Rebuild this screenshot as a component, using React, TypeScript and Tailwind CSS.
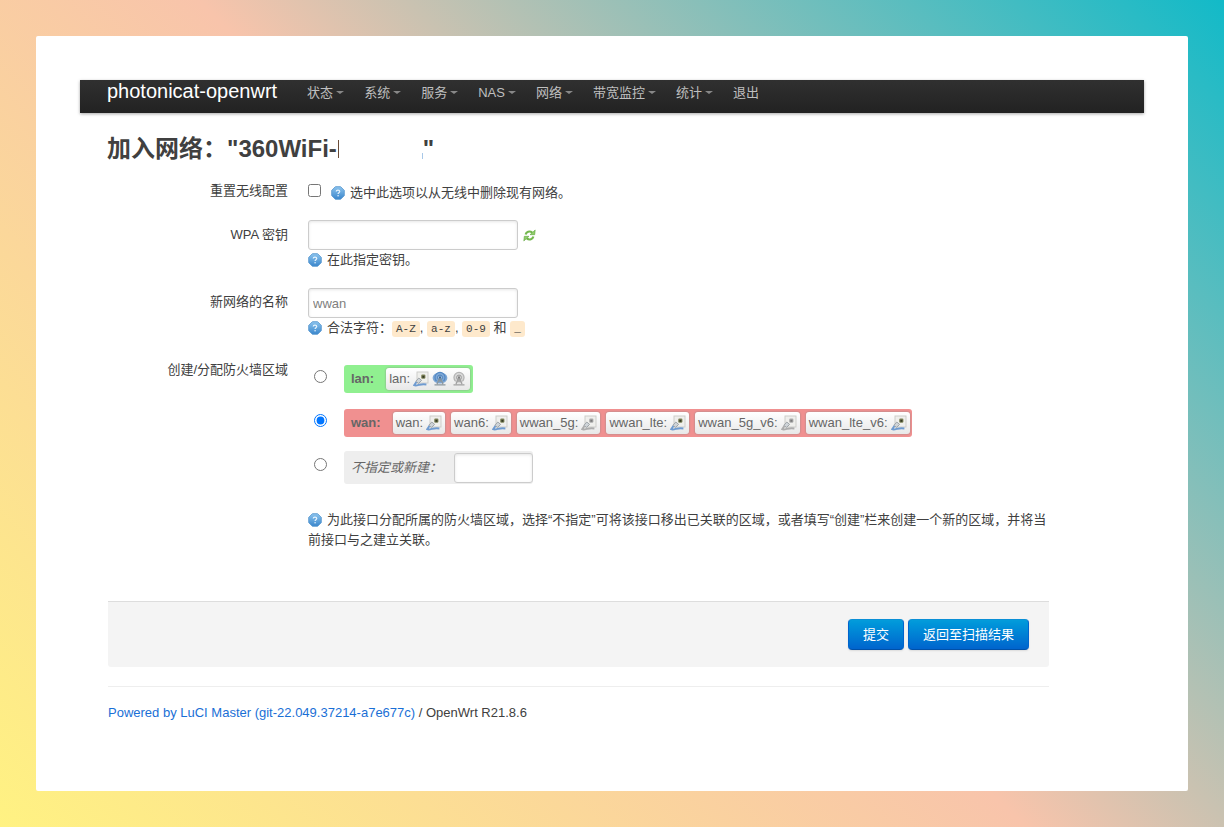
import { ReactNode, useId } from "react";

const INPUT =
  "rounded-[3px] border border-[#ccc] bg-white px-1 text-[13px] text-[#808080] shadow-[inset_0_1px_3px_rgba(0,0,0,0.1)] outline-none";

function HelpIcon() {
  const id = useId();
  return (
    <svg className="mr-[5px] inline-block size-[14px] align-[-3px]" viewBox="0 0 16 16" aria-hidden="true">
      <defs>
        <linearGradient id={id} x1="0" y1="0" x2="0" y2="1">
          <stop offset="0" stopColor="#8cc4ee" />
          <stop offset="1" stopColor="#3a86cc" />
        </linearGradient>
      </defs>
      <path d="M5 .8h6L15.2 5v6L11 15.2H5L.8 11V5z" fill={`url(#${id})`} stroke="#5b9ad0" strokeLinejoin="round" />
      <path d="M6 6.4C6 5.2 6.8 4.6 8 4.6s2 .7 2 1.7c0 1.3-1.9 1.4-1.9 2.8" fill="none" stroke="#e6f3fd" strokeWidth="1.4" />
      <circle cx="8.1" cy="11.2" r=".9" fill="#e6f3fd" />
    </svg>
  );
}

function RefreshIcon() {
  return (
    <svg className="size-[13px]" viewBox="0 0 16 16" aria-hidden="true">
      <g fill="none" stroke="#74b84e" strokeWidth="2.6">
        <path d="M3.2 6.8C4 3.6 8 1.8 11.4 4.4" />
        <path d="M12.8 9.2C12 12.4 8 14.2 4.6 11.6" />
      </g>
      <path d="M15 1.2 14.4 7H8.6z" fill="#8fcf68" stroke="#5ca23a" strokeWidth=".7" strokeLinejoin="round" />
      <path d="M1 14.8 1.6 9h5.8z" fill="#8fcf68" stroke="#5ca23a" strokeWidth=".7" strokeLinejoin="round" />
    </svg>
  );
}

function PortIcon({ off = false }: { off?: boolean }) {
  const cable = off ? "#adadad" : "#6f9bd0";
  return (
    <svg className="size-4" viewBox="0 0 16 16" aria-hidden="true">
      <rect x="4" y="1" width="11" height="11" fill="#efefec" stroke="#cdcdca" />
      <rect x="8.2" y="3.6" width="4.2" height="4.2" rx="1.2" fill={off ? "#ababab" : "#7d8358"} />
      <rect x="9.4" y="4.8" width="2" height="2" fill={off ? "#7a7a7a" : "#343824"} />
      <path d="M5.8 7 8.6 9.4 5.6 12.4 2.8 10.4z" fill="#cfd4d8" stroke="#a0a6aa" />
      <path d="M3.4 11 1.2 14.2c1.6.7 3.4 0 5.2-.5 2.4-.6 4.4-.5 7-.3" fill="none" stroke={cable} strokeWidth="2" />
    </svg>
  );
}

function WifiIcon({ off = false }: { off?: boolean }) {
  return (
    <svg className="size-4" viewBox="0 0 16 16" aria-hidden="true">
      <ellipse cx="8" cy="7" rx={off ? 5.4 : 7.4} ry="5.6" fill={off ? "#c4c4c4" : "#719fd1"} opacity={off ? 0.6 : 0.9} />
      <path d="M4.5 10a5 5 0 1 1 7 0" fill="none" stroke={off ? "#b4b4b4" : "#5288c4"} strokeWidth="1.2" />
      <circle cx="8" cy="6.5" r="2.4" fill={off ? "#ddd" : "#a9c9eb"} stroke={off ? "#999" : "#477db8"} />
      <path d="m8 6-3 7M8 6l3 7M6 10h4M2.5 13.8h11" fill="none" stroke={off ? "#a0a0a0" : "#8a959c"} strokeWidth="1.3" />
      <circle cx="8" cy="6.4" r="1.1" fill={off ? "#808080" : "#3b6899"} />
    </svg>
  );
}

function Network({ name, children }: { name: string; children: ReactNode }) {
  return (
    <span className="flex h-[22px] items-center gap-[3px] rounded-[3px] bg-linear-to-b from-white to-[#e8e8e8] px-[3px] whitespace-nowrap shadow-[0_0_2px_#888]">
      {name}:
      {children}
    </span>
  );
}

function Row({ label, htmlFor, children, className }: { label: string; htmlFor?: string; children: ReactNode; className: string }) {
  const labelClass = "w-[180px] shrink-0 text-right leading-[18px]";
  return (
    <div className={`flex gap-5 ${className}`}>
      {htmlFor ? (
        <label htmlFor={htmlFor} className={labelClass}>{label}</label>
      ) : (
        <span id="zone-label" className={labelClass}>{label}</span>
      )}
      <div className="min-w-0 flex-1">{children}</div>
    </div>
  );
}

const MENU = ["状态", "系统", "服务", "NAS", "网络", "带宽监控", "统计"];

const WAN = [
  { name: "wan", off: false },
  { name: "wan6", off: false },
  { name: "wwan_5g", off: true },
  { name: "wwan_lte", off: false },
  { name: "wwan_5g_v6", off: true },
  { name: "wwan_lte_v6", off: false },
];

const RADIO = "mx-[6px] size-[13px] shrink-0";
const CODE = "rounded-[3px] bg-[#fee9cc] px-1 py-[2px] font-['Liberation_Mono',monospace] text-[11px] text-[#404040]";
const BUTTON =
  "h-[31px] rounded-[4px] border border-[#0064cd] border-t-[#0a8fd6] border-b-[#0050a8] bg-linear-to-b from-[#049cdb] to-[#0064cd] px-[14px] text-[13px] text-white shadow-[0_1px_2px_rgba(0,0,0,0.1)]";

export default function App() {
  return (
    <div className="min-h-screen bg-[linear-gradient(45deg,#fff282_0%,#f8c4ab_50%,#12bac8_100%)] p-9 font-['Liberation_Sans','Noto_Sans_CJK_SC',sans-serif] text-[13px] leading-[18px] text-[#404040]">
      <div className="min-h-[755px] rounded-[2px] bg-white px-11 pt-11">
        <header className="flex h-[33px] bg-linear-to-b from-[#303030] to-[#222] pl-[27px] shadow-[0_1px_3px_rgba(0,0,0,0.35)]">
          <a href="#home" className="mr-[30px] pt-[1px] text-[20px] leading-[20px] text-white">photonicat-openwrt</a>
          <nav className="flex gap-5 pt-[4px] text-[#bfbfbf]">
            {MENU.map((item) => (
              <a key={item} href="#menu" className="flex items-center gap-[3px] self-start">
                {item}
                <span className="mb-[2px] size-0 border-x-4 border-t-[3px] border-x-transparent border-t-[#888]" />
              </a>
            ))}
            <a href="#logout" className="self-start">退出</a>
          </nav>
        </header>

        <main className="mr-[95px] ml-[27px]">
          <h2 className="mt-[18px] flex h-9 items-center text-[24px] leading-9 font-bold whitespace-nowrap">
            加入网络："360WiFi-
            <span className="ml-px h-[18px] w-px bg-[#6b4c38]" />
            <span className="mb-[8px] ml-[83px] h-[6px] w-px self-end bg-[#a8c8e8]" />
            <span>"</span>
          </h2>

          <form onSubmit={(e) => e.preventDefault()} className="ml-px">
            <Row label="重置无线配置" htmlFor="reset" className="mt-[15px]">
              <div className="flex items-start">
                <input id="reset" type="checkbox" className="mt-[2px] mr-[10px] size-[13px]" />
                <span className="pt-[2px]"><HelpIcon />选中此选项以从无线中删除现有网络。</span>
              </div>
            </Row>

            <Row label="WPA 密钥" htmlFor="key" className="mt-[24px]">
              <div className="-mt-[6px] flex items-center gap-[5px]">
                <input id="key" type="password" className={`${INPUT} h-[30px] w-[210px]`} />
                <button type="button" aria-label="显示密钥"><RefreshIcon /></button>
              </div>
              <div className="mt-[1px]"><HelpIcon />在此指定密钥。</div>
            </Row>

            <Row label="新网络的名称" htmlFor="name" className="mt-[24px]">
              <div className="-mt-[5px]">
                <input id="name" type="text" defaultValue="wwan" className={`${INPUT} block h-[30px] w-[210px]`} />
              </div>
              <div className="mt-[1px]">
                <HelpIcon />合法字符：<code className={CODE}>A-Z</code>, <code className={CODE}>a-z</code>, <code className={CODE}>0-9</code> 和 <code className={CODE}>_</code>
              </div>
            </Row>

            <Row label="创建/分配防火墙区域" className="mt-[23px]">
              <div role="radiogroup" aria-labelledby="zone-label" className="pt-1 text-[#666]">
                <div className="flex items-start">
                  <input type="radio" name="zone" id="zone-lan" className={`${RADIO} mt-[5px]`} />
                  <label htmlFor="zone-lan" className="ml-[11px] flex h-7 items-center rounded-[3px] bg-[#90f090] pr-[3px] pl-[7px]">
                    <strong className="mr-3">lan:</strong>
                    <Network name="lan"><PortIcon /><WifiIcon /><WifiIcon off /></Network>
                  </label>
                </div>
                <div className="mt-4 flex items-start">
                  <input type="radio" name="zone" id="zone-wan" defaultChecked className={`${RADIO} mt-[5px]`} />
                  <label htmlFor="zone-wan" className="ml-[11px] flex h-7 items-center gap-[6px] rounded-[3px] bg-[#f09090] pr-[2px] pl-[7px]">
                    <strong className="mr-[6px]">wan:</strong>
                    {WAN.map((net) => (
                      <Network key={net.name} name={net.name}><PortIcon off={net.off} /></Network>
                    ))}
                  </label>
                </div>
                <div className="mt-[14px] flex items-start">
                  <input type="radio" name="zone" id="zone-new" className={`${RADIO} mt-[7px]`} />
                  <div className="ml-[11px] flex h-[33px] items-center rounded-[3px] bg-[#eee] pl-[7px]">
                    <label htmlFor="zone-new" className="mr-3 italic">不指定或新建：</label>
                    <input type="text" aria-label="新区域名称" className={`${INPUT} h-[30px] w-[79px]`} />
                  </div>
                </div>
              </div>
              <p className="mt-[26px] leading-[20px]">
                <HelpIcon />为此接口分配所属的防火墙区域，选择“不指定”可将该接口移出已关联的区域，或者填写“创建”栏来创建一个新的区域，并将当前接口与之建立关联。
              </p>
            </Row>

            <div className="mt-[51px] flex h-[66px] items-start justify-end gap-1 rounded-b-[3px] border-t border-[#ddd] bg-[#f4f4f4] pt-[17px] pr-5">
              <button type="submit" className={BUTTON}>提交</button>
              <button type="button" className={BUTTON}>返回至扫描结果</button>
            </div>
          </form>

          <footer className="mt-[19px] ml-px border-t border-[#eee] pt-[17px]">
            <a href="#luci" className="text-[#1a6fd6]">Powered by LuCI Master (git-22.049.37214-a7e677c)</a> / OpenWrt R21.8.6
          </footer>
        </main>
      </div>
    </div>
  );
}
